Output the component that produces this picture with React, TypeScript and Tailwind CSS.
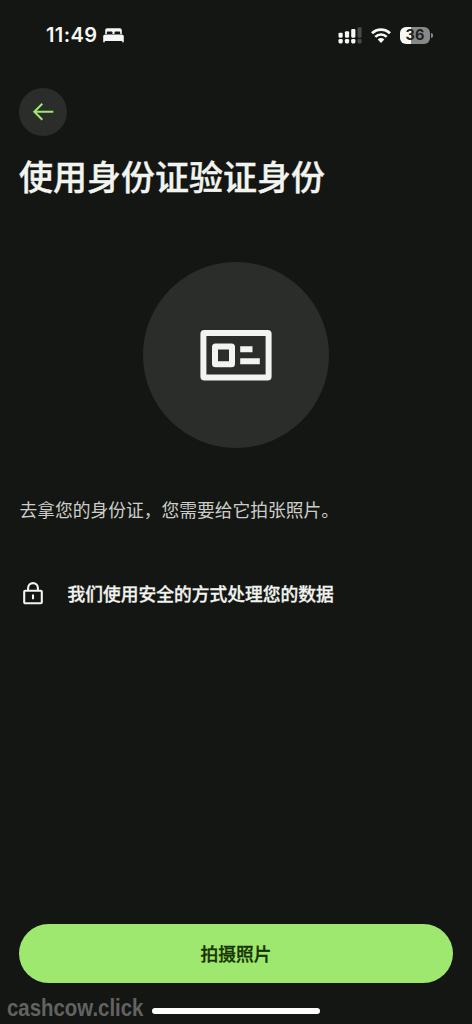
import React from 'react';

const BedIcon = () => (
  <svg width="21" height="15" viewBox="0 0 21 15" fill="#f7f8f5">
    <path d="M2.200 6V2.400C2.200 1 3 .3 4.300.3h12.400c1.300 0 2.100.7 2.100 2.100V6h-1.600V4.600c0-.8-.4-1.200-1.200-1.200h-3.300c-.8 0-1.200.4-1.200 1.200V6h-2V4.600c0-.8-.4-1.200-1.200-1.200H5c-.8 0-1.200.4-1.200 1.200V6z" />
    <path d="M2.500 6.500h16c1.500 0 2.300.9 2.300 2.300v4.700c0 .6-.3.9-.8.9s-.8-.3-.8-.9v-.5H1.800v.5c0 .6-.3.9-.8.9s-.8-.3-.8-.9V8.800c0-1.400.8-2.300 2.300-2.300z" />
  </svg>
);

const SignalIcon = () => (
  <svg width="24" height="17" viewBox="0 0 24 17" fill="#f7f8f5">
    <rect x="0.500" y="5.700" width="4.200" height="5" rx="1.100" />
    <rect x="6.900" y="4.200" width="4.200" height="6.500" rx="1.100" />
    <rect x="13.200" y="2" width="4.200" height="8.700" rx="1.100" />
    <rect x="19.600" y="0.300" width="4" height="10.400" rx="1.100" fill="#4a4b49" />
    <rect x="0.500" y="12" width="4.200" height="4.400" rx="1.300" />
    <rect x="6.900" y="12" width="4.200" height="4.400" rx="1.300" />
    <rect x="13.200" y="12" width="4.200" height="4.400" rx="1.300" />
    <rect x="19.600" y="12" width="4" height="4.400" rx="1.300" fill="#4a4b49" />
  </svg>
);

const WifiIcon = () => (
  <svg width="20" height="15" viewBox="0 0 20 15" fill="none" stroke="#f7f8f5" strokeWidth="2.700">
    <path d="M1 5.300a12.700 12.700 0 0 1 18 0" />
    <path d="M4.300 8.900a8 8 0 0 1 11.400 0" />
    <path d="M6.700 11.500a4.500 4.500 0 0 1 6.600 0L10 14.900z" fill="#f7f8f5" stroke="none" />
  </svg>
);

const StatusBar = () => (
  <div className="flex h-[70px] items-center pl-[46px] pr-[39px]">
    <span className="w-[57px] font-[Inter] text-[20px] leading-none font-semibold tracking-[0.4px] text-[#f7f8f5]">
      11:49
    </span>
    <BedIcon />
    <div className="ml-auto flex items-center">
      <SignalIcon />
      <div className="ml-[9px]">
        <WifiIcon />
      </div>
      <div className="ml-[9px] flex h-[17px] w-[30px] items-center justify-center rounded-[6px] bg-linear-to-r from-[#f7f8f5] from-36% to-[#878986] to-36% font-[Inter] text-[14.500px] leading-none font-bold text-[#20211f]">
        36
      </div>
      <div className="ml-px h-[5px] w-[2px] rounded-r-full bg-[#878986]" />
    </div>
  </div>
);

const IdCardIcon = () => (
  <svg width="72" height="51" viewBox="0 0 72 51" fill="none" stroke="#f2f4ef" strokeWidth="6">
    <rect x="3.400" y="3" width="65.200" height="44.500" rx="1" />
    <rect x="15" y="16.500" width="17" height="17.700" rx="0.500" />
    <path d="M40.200 19.300h12.300M40.200 31.200h19.600" />
  </svg>
);

const LockIcon = () => (
  <svg width="20" height="23" viewBox="0 0 20 23" fill="none" stroke="#f2f4ef" strokeWidth="2.100">
    <rect x="1.200" y="8.700" width="17.600" height="12.500" rx="1" />
    <path d="M5.100 8.700V6a4.900 4.900 0 0 1 9.800 0v2.700M10 12.600v4.600" />
  </svg>
);

const App: React.FC = () => {
  return (
    <div className="flex h-[1024px] w-full flex-col overflow-hidden bg-[#141613] font-['Inter','Noto_Sans_CJK_SC',sans-serif]">
      <StatusBar />

      <main className="flex flex-1 flex-col px-[19px] pt-[18px]">
        <button className="flex size-[48px] items-center justify-center rounded-full bg-[#2b2d2a]">
          <svg width="22" height="18" viewBox="0 0 22 18" fill="none" stroke="#9fe870" strokeWidth="2">
            <path d="M21.300 8.800H2.500M10.300 0.800L2.300 8.800l8 8" />
          </svg>
        </button>

        <h1 className="mt-[16px] font-['Noto_Sans_CJK_SC',sans-serif] text-[34px] leading-[48px] font-medium whitespace-nowrap text-[#f2f4ef] [-webkit-text-stroke:0.4px_#f2f4ef]">
          使用身份证验证身份
        </h1>

        <div className="mt-[62px] flex size-[186px] items-center justify-center self-center rounded-full bg-[#2b2d2a]">
          <IdCardIcon />
        </div>

        <p className="mt-[47px] pl-[0.500px] font-['Noto_Sans_CJK_SC',sans-serif] text-[17.750px] leading-[28px] whitespace-nowrap text-[#cccec9]">
          去拿您的身份证，您需要给它拍张照片。
        </p>

        <div className="mt-[56px] flex items-center pl-[4px]">
          <LockIcon />
          <span className="ml-[24.500px] font-['Noto_Sans_CJK_SC',sans-serif] text-[17.750px] leading-[28px] font-medium whitespace-nowrap text-[#f2f4ef] [-webkit-text-stroke:0.3px_#f2f4ef]">
            我们使用安全的方式处理您的数据
          </span>
        </div>

        <button className="mt-auto h-[59px] w-full rounded-full bg-[#9fe870] font-['Noto_Sans_CJK_SC',sans-serif] text-[17.750px] font-medium text-[#173300] [-webkit-text-stroke:0.3px_#173300]">
          拍摄照片
        </button>
      </main>

      <footer className="flex h-[41px] items-start pl-[7px]">
        <div className="mt-[11px] w-[145px]">
          <span className="inline-block origin-left scale-x-[0.85] font-['Liberation_Sans',sans-serif] text-[24px] leading-[28px] font-bold text-[#626361]">
            cashcow.click
          </span>
        </div>
        <div className="mt-[25px] h-[6px] w-[168px] rounded-full bg-white" />
      </footer>
    </div>
  );
};

export default App;
